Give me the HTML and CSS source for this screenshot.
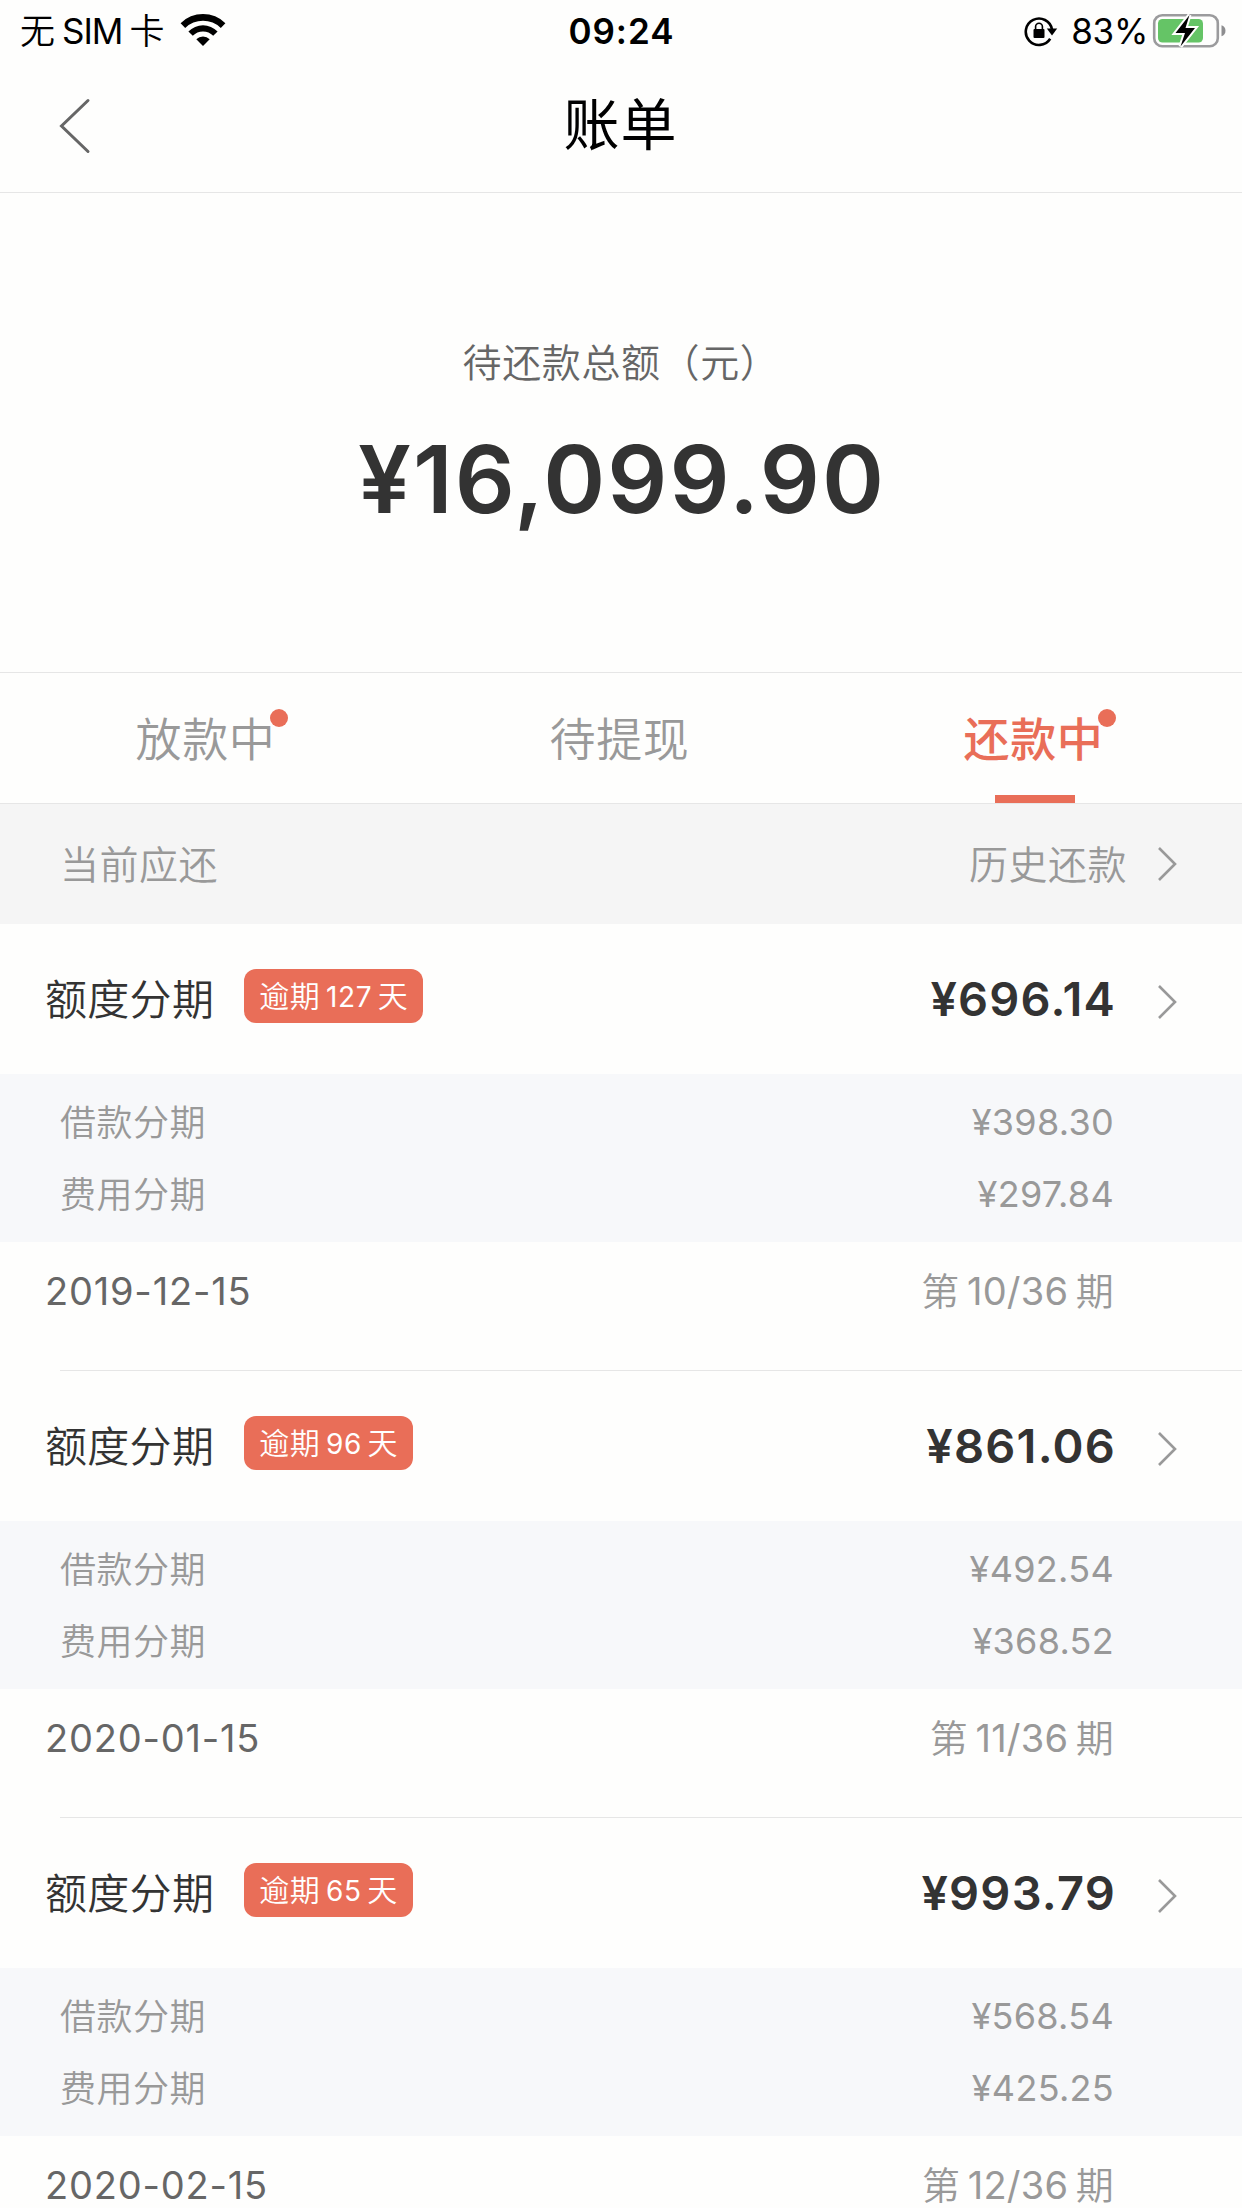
FILE: index.html
```html
<!DOCTYPE html>
<html lang="zh-CN">
<head>
  <meta charset="UTF-8">
  <title>账单</title>
  <meta name="viewport" content="width=device-width, initial-scale=1.0">
  <link rel="stylesheet" href="styles.css">
</head>
<body>
  <!-- STATUS BAR -->
  <div class="status-bar">
    <div class="status-left">
      <span class="carrier">无<span class="latin">SIM</span>卡</span>
      <svg class="wifi" width="46" height="34" viewBox="0 0 46 34">
        <path d="M0.6 10.2A31.6 31.6 0 0 1 45.4 10.2L40.8 15A25.4 25.4 0 0 0 5.2 15Z"/>
        <path d="M8.4 18.4A20.6 20.6 0 0 1 37.6 18.4L33.2 22.8A14.4 14.4 0 0 0 12.8 22.8Z"/>
        <path d="M16.3 26.3A9.6 9.6 0 0 1 29.7 26.3L23 33Z"/>
      </svg>
    </div>
    <div class="status-time">09:24</div>
    <div class="status-right">
      <svg class="lock" width="34" height="32" viewBox="0 0 34 32">
        <path d="M26.2 23.7A13.2 13.2 0 1 1 28 14.5" fill="none" stroke="#000" stroke-width="2.6"/>
        <path d="M22.8 13.6H33.2L28 20.4Z"/>
        <rect x="9.5" y="14" width="11" height="9" rx="1"/>
        <path d="M11.6 14.5V11.6a3.4 3.4 0 0 1 6.8 0V14.5" fill="none" stroke="#000" stroke-width="1.6"/>
      </svg>
      <span class="percent">83%</span>
      <svg class="battery" width="75" height="36" viewBox="0 0 75 36">
        <rect x="2.2" y="2.2" width="63.6" height="31" rx="8" fill="none" stroke="#9b9b9d" stroke-width="2.6"/>
        <path d="M69.5 12.2C72 13 73.5 15 73.5 17.7S72 22.4 69.5 23.2Z" fill="#8e8e90"/>
        <rect x="6" y="6" width="45" height="23.5" rx="4.5" fill="#65c466"/>
        <path class="bolt" d="M37.5 2L23.5 20H33L28.5 33.5L43 15H33.5Z"/>
      </svg>
    </div>
  </div>

  <!-- HEADER -->
  <div class="header">
    <svg class="back" width="32" height="56" viewBox="0 0 32 56">
      <path d="M29 2.5L2.5 28L29 53.5"/>
    </svg>
    <h1>账单</h1>
  </div>

  <!-- TOTAL -->
  <div class="summary">
    <p class="summary-label">待还款总额（元）</p>
    <p class="summary-amount">¥16,099.90</p>
  </div>

  <!-- TABS -->
  <div class="tabs">
    <div class="tab"><span class="tab-text">放款中<i class="dot"></i></span></div>
    <div class="tab"><span class="tab-text">待提现</span></div>
    <div class="tab active"><span class="tab-text">还款中<i class="dot"></i></span></div>
  </div>

  <div class="section-bar">
    <span>当前应还</span>
    <span class="history">历史还款</span>
    <svg class="arrow" width="20" height="36" viewBox="0 0 20 36"><path d="M2 2L18 18L2 34"/></svg>
  </div>

  <!-- BILLS -->
  <div class="bill">
    <div class="bill-head">
      <span class="bill-name">额度分期</span>
      <span class="badge">逾期<span class="latin">127</span>天</span>
      <span class="bill-amount">¥696.14</span>
      <svg class="arrow" width="20" height="36" viewBox="0 0 20 36"><path d="M2 2L18 18L2 34"/></svg>
    </div>
    <div class="bill-detail">
      <div class="row"><span class="label">借款分期</span><span class="num">¥398.30</span></div>
      <div class="row"><span class="label">费用分期</span><span class="num">¥297.84</span></div>
    </div>
    <div class="bill-foot">
      <span class="date">2019-12-15</span>
      <span class="term">第<span class="latin">10/36</span>期</span>
    </div>
  </div>

  <div class="bill">
    <div class="bill-head">
      <span class="bill-name">额度分期</span>
      <span class="badge">逾期<span class="latin">96</span>天</span>
      <span class="bill-amount">¥861.06</span>
      <svg class="arrow" width="20" height="36" viewBox="0 0 20 36"><path d="M2 2L18 18L2 34"/></svg>
    </div>
    <div class="bill-detail">
      <div class="row"><span class="label">借款分期</span><span class="num">¥492.54</span></div>
      <div class="row"><span class="label">费用分期</span><span class="num">¥368.52</span></div>
    </div>
    <div class="bill-foot">
      <span class="date">2020-01-15</span>
      <span class="term">第<span class="latin">11/36</span>期</span>
    </div>
  </div>

  <div class="bill">
    <div class="bill-head">
      <span class="bill-name">额度分期</span>
      <span class="badge">逾期<span class="latin">65</span>天</span>
      <span class="bill-amount">¥993.79</span>
      <svg class="arrow" width="20" height="36" viewBox="0 0 20 36"><path d="M2 2L18 18L2 34"/></svg>
    </div>
    <div class="bill-detail">
      <div class="row"><span class="label">借款分期</span><span class="num">¥568.54</span></div>
      <div class="row"><span class="label">费用分期</span><span class="num">¥425.25</span></div>
    </div>
    <div class="bill-foot">
      <span class="date">2020-02-15</span>
      <span class="term">第<span class="latin">12/36</span>期</span>
    </div>
  </div>
</body>
</html>
```
FILE: styles.css
```css
* {
  box-sizing: border-box;
}
body {
  margin: 0;
  height: 2208px;
  overflow: hidden;
  background: #fefefd;
  font-family: Inter, 'Noto Sans CJK SC', sans-serif;
  font-weight: 350;
  color: #333;
}
h1, p {
  margin: 0;
}
.latin,
.num,
.date,
.percent {
  font-weight: 400;
}
.latin {
  margin: 0 0.2em;
}

/* status bar */
.status-bar {
  display: grid;
  grid-template-columns: 1fr auto 1fr;
  height: 62px;
  padding: 0 15px 0 16px;
  line-height: 62px;
  font-size: 35px;
  color: #000;
}
.status-left,
.status-right {
  display: flex;
  align-items: center;
}
.status-right {
  justify-content: flex-end;
}
.status-time {
  font-weight: 600;
  letter-spacing: 1px;
}
.carrier {
  margin-left: 4px;
}
.carrier .latin {
  margin: 0 0.2em;
  letter-spacing: -1px;
}
.wifi {
  margin: -3px 0 0 15px;
}
.percent {
  margin: 0 4px 0 13px;
  letter-spacing: -0.3px;
}
.bolt {
  fill: #000;
  stroke: #fefefd;
  stroke-width: 4;
  paint-order: stroke;
}

/* header */
.header {
  display: grid;
  grid-template-columns: 60px 1fr 60px;
  align-items: center;
  height: 131px;
  padding: 0 60px 3px 59px;
  border-bottom: 1px solid #e6e6e6;
}
.header h1 {
  margin-top: -10px;
  font-size: 56px;
  font-weight: 400;
  letter-spacing: 1px;
  text-align: center;
  color: #000;
}
.back path {
  fill: none;
  stroke: #666;
  stroke-width: 3;
  stroke-linecap: round;
}

/* total */
.summary {
  height: 480px;
  padding-top: 140px;
  border-bottom: 1px solid #e6e6e6;
  text-align: center;
}
.summary-label {
  font-size: 39px;
  line-height: 60px;
  letter-spacing: 0.6px;
  color: #666;
}
.summary-amount {
  margin-top: 36px;
  font-size: 94px;
  font-weight: 600;
  line-height: 100px;
  letter-spacing: 2px;
  text-indent: 2px;
}

/* tabs */
.tabs {
  display: grid;
  grid-template-columns: repeat(3, 1fr);
  height: 131px;
  border-bottom: 1px solid #e6e6e6;
}
.tab {
  position: relative;
  height: 130px;
  line-height: 132px;
  font-size: 46px;
  letter-spacing: 0.7px;
  text-align: center;
  color: #999;
}
.tab-text {
  position: relative;
  padding-right: 3px;
}
.tab.active {
  font-weight: 500;
  color: #e96e58;
}
.tab.active::after {
  content: '';
  position: absolute;
  left: 50%;
  bottom: 0;
  width: 80px;
  height: 8px;
  margin-left: -40px;
  background: #e96e58;
}
.dot {
  position: absolute;
  top: -2px;
  right: -9px;
  width: 18px;
  height: 18px;
  border-radius: 50%;
  background: #e96e58;
}

.section-bar {
  display: flex;
  align-items: center;
  height: 120px;
  padding: 0 65px 0 60px;
  background: #f5f5f5;
  font-size: 39px;
  line-height: 60px;
  letter-spacing: 0.5px;
  color: #999;
}
.section-bar span {
  padding-top: 2px;
}
.history {
  margin-left: auto;
}
.arrow {
  flex: none;
  margin-left: 30px;
}
.arrow path {
  fill: none;
  stroke: #999;
  stroke-width: 2.6;
}

/* bills */
.bill {
  position: relative;
  height: 447px;
}
.bill::after {
  content: '';
  position: absolute;
  left: 60px;
  right: 0;
  bottom: 0;
  border-bottom: 1px solid #e6e6e6;
}
.bill-head {
  display: flex;
  align-items: center;
  height: 150px;
  padding: 0 65px 0 45px;
  line-height: 60px;
}
.bill-name {
  padding-top: 2px;
  font-size: 42px;
  letter-spacing: 0.3px;
}
.badge {
  height: 54px;
  margin: -6px 0 0 30px;
  padding: 0 15px;
  border-radius: 12px;
  background: #e96e58;
  font-size: 30px;
  line-height: 54px;
  letter-spacing: 0.6px;
  color: #fff;
}
.badge .latin {
  font-size: 28px;
}
.bill-amount {
  margin-left: auto;
  font-size: 47px;
  font-weight: 600;
  letter-spacing: 1.2px;
}
.bill-head .arrow {
  margin: 6px 0 0 41px;
}
.bill-detail {
  height: 168px;
  padding: 12px 128px 12px 60px;
  background: #f7f8fa;
}
.row {
  display: flex;
  justify-content: space-between;
  height: 72px;
  font-size: 36px;
  line-height: 72px;
  letter-spacing: 0.5px;
  color: #999;
}
.row .label {
  padding-top: 1px;
}
.row .num {
  letter-spacing: 0.3px;
}
.bill-foot {
  display: flex;
  justify-content: space-between;
  padding: 0 128px 0 45px;
  font-size: 38px;
  line-height: 98px;
}
.date {
  letter-spacing: 0.8px;
  color: #666;
}
.term {
  letter-spacing: 0.2px;
  color: #999;
}
```
